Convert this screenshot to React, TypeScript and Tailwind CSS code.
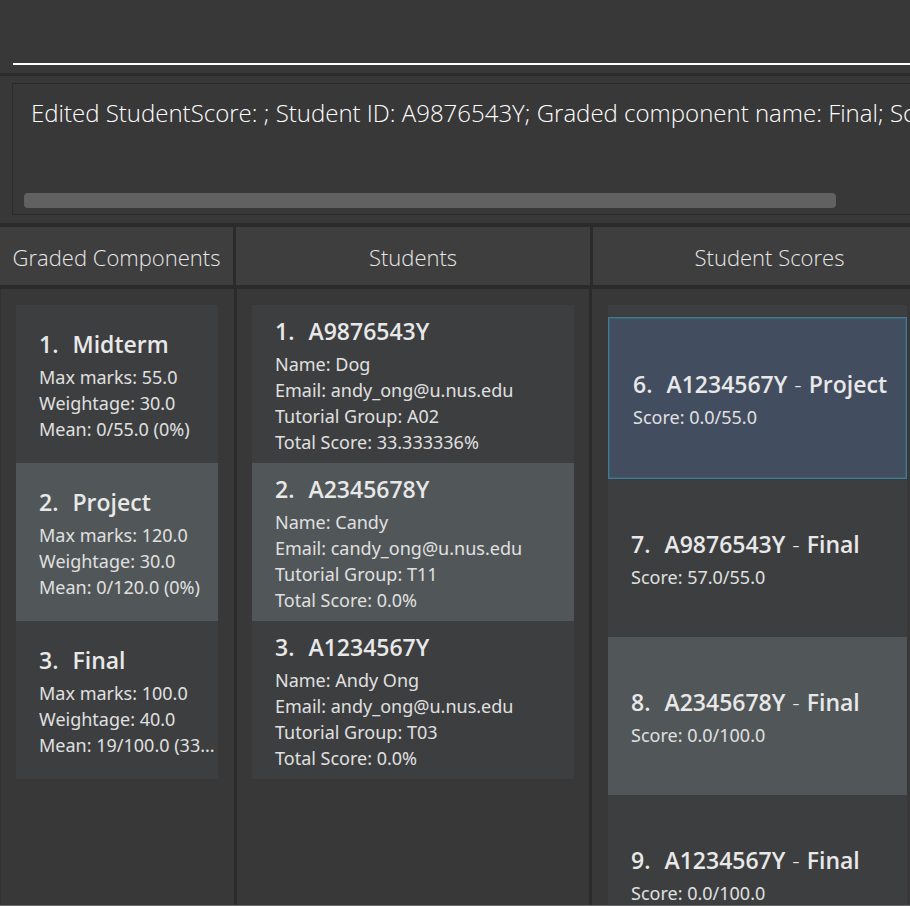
import type { ReactNode } from "react";

type Card = { id: number; title: ReactNode; lines: string[]; selected?: boolean };

const components: Card[] = [
  { id: 1, title: "Midterm", lines: ["Max marks: 55.0", "Weightage: 30.0", "Mean: 0/55.0 (0%)"] },
  { id: 2, title: "Project", lines: ["Max marks: 120.0", "Weightage: 30.0", "Mean: 0/120.0 (0%)"] },
  { id: 3, title: "Final", lines: ["Max marks: 100.0", "Weightage: 40.0", "Mean: 19/100.0 (33..."] },
];

const students: Card[] = [
  {
    id: 1,
    title: "A9876543Y",
    lines: ["Name: Dog", "Email: andy_ong@u.nus.edu", "Tutorial Group: A02", "Total Score: 33.333336%"],
  },
  {
    id: 2,
    title: "A2345678Y",
    lines: ["Name: Candy", "Email: candy_ong@u.nus.edu", "Tutorial Group: T11", "Total Score: 0.0%"],
  },
  {
    id: 3,
    title: "A1234567Y",
    lines: ["Name: Andy Ong", "Email: andy_ong@u.nus.edu", "Tutorial Group: T03", "Total Score: 0.0%"],
  },
];

function ScoreTitle({ student, component }: { student: string; component: string }) {
  return (
    <>
      {student} <span className="mx-px font-light">-</span> {component}
    </>
  );
}

const scores: Card[] = [
  { id: 6, title: <ScoreTitle student="A1234567Y" component="Project" />, lines: ["Score: 0.0/55.0"], selected: true },
  { id: 7, title: <ScoreTitle student="A9876543Y" component="Final" />, lines: ["Score: 57.0/55.0"] },
  { id: 8, title: <ScoreTitle student="A2345678Y" component="Final" />, lines: ["Score: 0.0/100.0"] },
  { id: 9, title: <ScoreTitle student="A1234567Y" component="Final" />, lines: ["Score: 0.0/100.0"] },
];

function CardList({ label, cards }: { label: string; cards: Card[] }) {
  return (
    <ul aria-label={label}>
      {cards.map((card) => {
        const tone = card.selected
          ? "h-[162px] border border-[#3e7b91] bg-[#424d5f] pl-6 shadow-[inset_0_0_0_1px_#3f6074]"
          : card.id % 2 === 0
            ? "h-[158px] bg-[#515658] pl-[23px]"
            : "h-[158px] bg-[#3c3e3f] pl-[23px]";
        return (
          <li key={card.id} className={`flex flex-col justify-center ${tone}`}>
            <h3 className="mb-0.5 flex gap-3.5 text-[23px] leading-9 font-semibold whitespace-pre">
              <span>{card.id}.</span>
              <span>{card.title}</span>
            </h3>
            {card.lines.map((line) => (
              <p key={line} className="font-['Noto_Sans','Open_Sans',sans-serif] text-[18px] leading-[26px] whitespace-nowrap text-[#e0e0e0]">
                {line}
              </p>
            ))}
          </li>
        );
      })}
    </ul>
  );
}

function Header({ children, className }: { children: ReactNode; className: string }) {
  return (
    <h2
      className={`border-[#2b2b2b] bg-[#3e3e3e] pt-0.5 text-center text-[22px] leading-[56px] font-light whitespace-nowrap ${className}`}
    >
      {children}
    </h2>
  );
}

export default function App() {
  return (
    <div className="flex h-screen flex-col overflow-hidden border-b border-[#6b6b6b] bg-[#383838] font-['Open_Sans','Noto_Sans',sans-serif] text-[#e8e8e8]">
      <form className="border-b-[3px] border-[#2b2b2b] pb-2 pl-[13px]">
        <input
          type="text"
          aria-label="Command"
          className="block h-[65px] w-full border-b-2 border-white bg-transparent px-2 text-[24px] font-light outline-none"
        />
      </form>

      <section className="border-b-4 border-[#2b2b2b] pt-[7px] pb-2 pl-3">
        <div className="border-y border-l border-[#2b2b2b] pt-2 pb-1.5 pl-[11px]">
          <textarea
            readOnly
            wrap="off"
            aria-label="Result"
            className="block h-[101px] w-full resize-none overflow-hidden bg-transparent pt-[3px] pl-[7px] text-[24px] leading-9 font-light text-white outline-none"
            defaultValue="Edited StudentScore: ; Student ID: A9876543Y; Graded component name: Final; Score: 57.0"
          />
          <div className="h-[15px] w-11/12 rounded-[4px] bg-[#616161]" />
        </div>
      </section>

      <div className="grid grid-cols-[236fr_357fr_317fr] border-b-4 border-[#2b2b2b]">
        <Header className="border-r-[3px]">Graded Components</Header>
        <Header className="border-r-[3px]">Students</Header>
        <Header className="pl-9">Student Scores</Header>
      </div>

      <main className="grid min-h-0 flex-1 grid-cols-[237fr_355fr_318fr]">
        <div className="min-w-0 overflow-hidden border-r-[3px] border-l border-[#2b2b2b] border-l-[#323232] pt-4 pr-4 pl-[15px]">
          <CardList label="Graded Components" cards={components} />
        </div>
        <div className="min-w-0 overflow-hidden border-r-[3px] border-[#2b2b2b] px-[15px] pt-4">
          <CardList label="Students" cards={students} />
        </div>
        <div className="min-w-0 overflow-hidden pt-4 pr-[3px] pl-4">
          <div className="bg-[#3c3e3f] pt-3">
            <CardList label="Student Scores" cards={scores} />
          </div>
        </div>
      </main>
    </div>
  );
}
